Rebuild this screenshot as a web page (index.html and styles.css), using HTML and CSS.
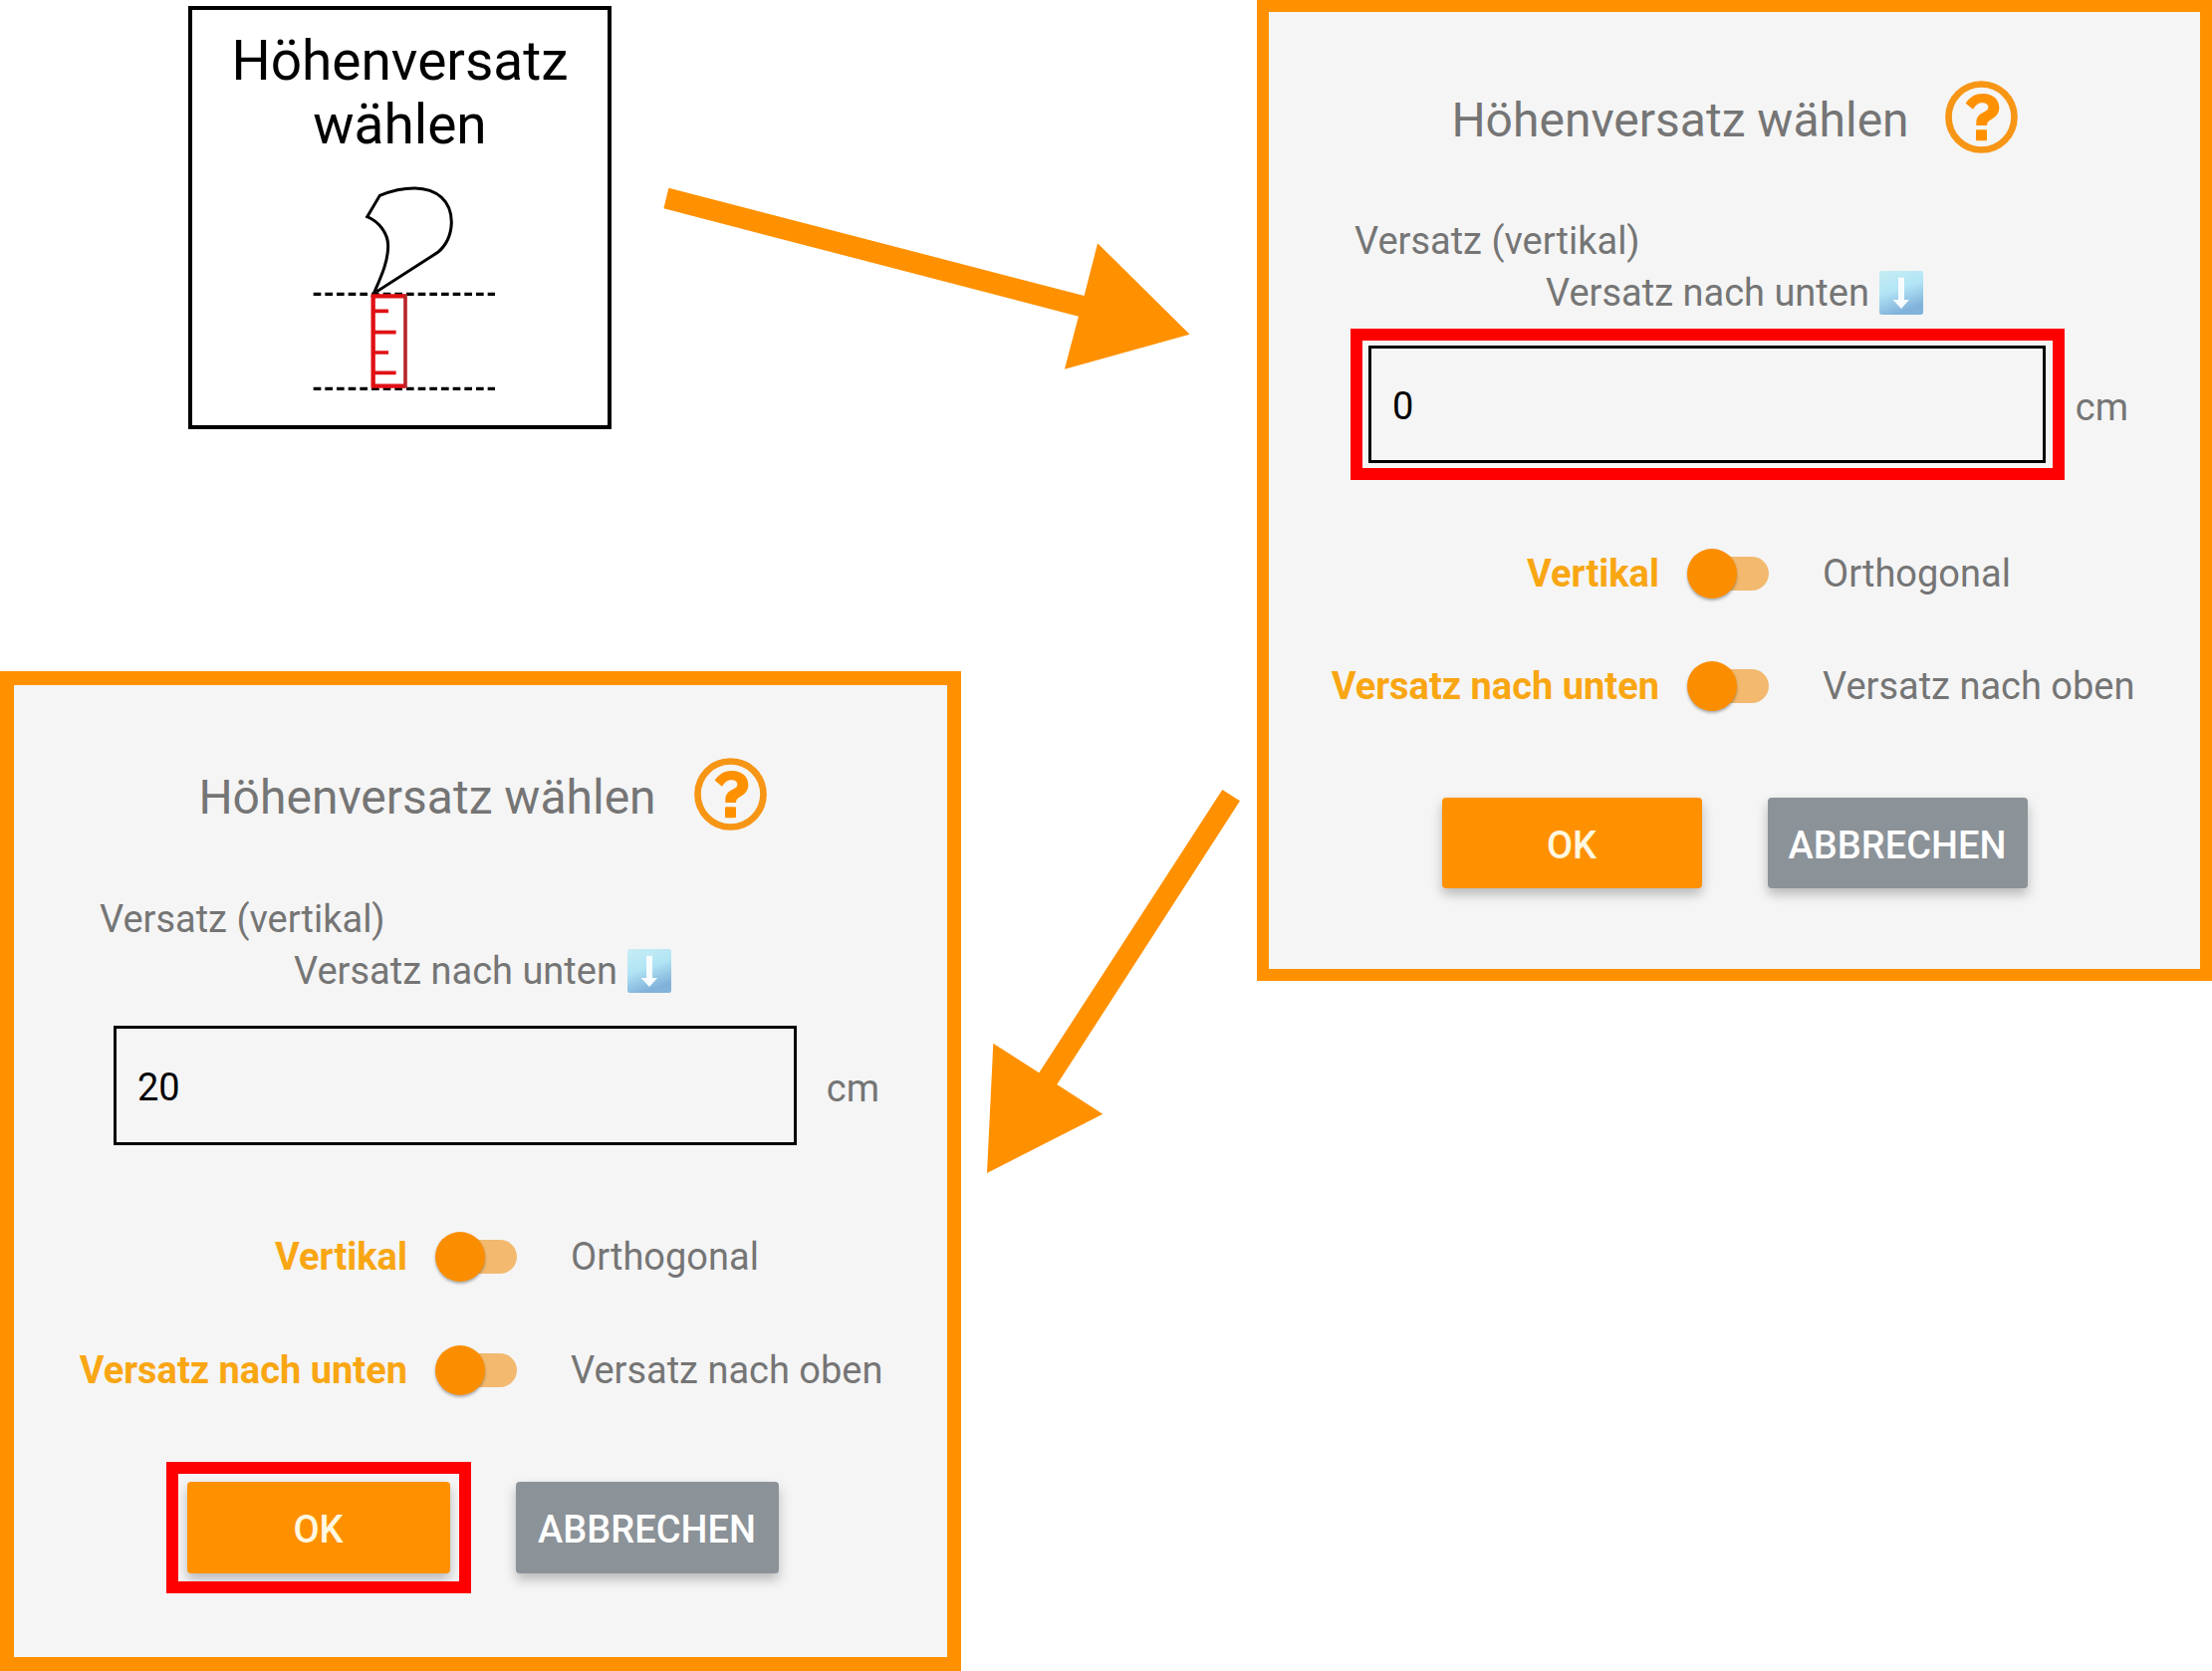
FILE: index.html
```html
<!DOCTYPE html>
<html lang="de">
<head>
<meta charset="utf-8">
<meta name="viewport" content="width=device-width, initial-scale=1">
<title>Höhenversatz wählen</title>
<link rel="stylesheet" href="styles.css">
</head>
<body>
<svg class="symbols" aria-hidden="true">
  <defs>
    <linearGradient id="sky" x1="0" y1="0" x2="0.35" y2="1">
      <stop offset="0" stop-color="#c6edf3"/>
      <stop offset="0.5" stop-color="#b2e5f5"/>
      <stop offset="1" stop-color="#80b2da"/>
    </linearGradient>
    <symbol id="help" viewBox="636 244 219 219">
      <circle cx="745.5" cy="353.5" r="99" fill="none" stroke="#f79515" stroke-width="20"/>
      <path fill="#ff9100" d="M698 312C712 292 728 283 750 283C778 283 799 299 799 325C799 345 787 354 775 361C766 366 762 370 762 379H730V370C730 352 740 345 752 339C762 334 766 331 766 324C766 315 758 311 747 311C735 311 729 318 720 330Z"/>
      <rect x="729" y="392" width="33" height="33" rx="3" fill="#ff9100"/>
    </symbol>
    <symbol id="down" viewBox="0 0 132 132">
      <rect width="132" height="132" rx="7" fill="url(#sky)"/>
      <path fill="#f7fcff" d="M57 20H75V87H90L66 114L41 87H57Z"/>
    </symbol>
  </defs>
</svg>

<main class="guide">
  <div class="column">
    <button class="tile" type="button">
      <span class="tile-title">Höhenversatz wählen</span>
      <svg class="tile-drawing" viewBox="380 555 570 630" aria-hidden="true">
        <g fill="none" stroke="#000" stroke-width="10">
          <path stroke-dasharray="23 12" d="M403 886H950M403 1171H950"/>
          <path stroke-width="9" d="M585 884C606 835 628 790 628 740C628 705 602 668 565 653L603 589C640 574 675 567 708 567C775 568 819 605 819 670C818 705 804 738 778 760Z"/>
        </g>
        <g fill="none" stroke="#e01014">
          <path stroke-width="13" d="M680 892H583V1163H680"/>
          <path stroke="#b8262a" stroke-width="11" d="M680 886V1169"/>
          <path stroke-width="11" d="M583 937H629M583 1001H652M583 1062H629M583 1123H652"/>
        </g>
      </svg>
    </button>

    <form class="dialog dialog-filled">
      <header class="dialog-head">
        <h2 class="dialog-title">Höhenversatz wählen</h2>
        <button class="help" type="button" aria-label="Hilfe"><svg viewBox="0 0 73 73"><use href="#help"/></svg></button>
      </header>
      <label class="caption" for="offset-2">Versatz (vertikal)</label>
      <p class="direction">Versatz nach unten <svg class="emoji" viewBox="0 0 44 44"><use href="#down"/></svg></p>
      <div class="field">
        <span class="field-box"><input class="field-input" id="offset-2" type="text" inputmode="numeric" value="20"></span>
        <span class="unit">cm</span>
      </div>
      <div class="switch-row">
        <label class="active" for="mode-2">Vertikal</label>
        <input class="switch" id="mode-2" type="checkbox" role="switch">
        <label for="mode-2">Orthogonal</label>
      </div>
      <div class="switch-row">
        <label class="active" for="side-2">Versatz nach unten</label>
        <input class="switch" id="side-2" type="checkbox" role="switch">
        <label for="side-2">Versatz nach oben</label>
      </div>
      <div class="actions">
        <span class="action marked"><button class="button ok" type="button">OK</button></span>
        <span class="action"><button class="button cancel" type="button">ABBRECHEN</button></span>
      </div>
    </form>
  </div>

  <div class="column column-right">
    <form class="dialog">
      <header class="dialog-head">
        <h2 class="dialog-title">Höhenversatz wählen</h2>
        <button class="help" type="button" aria-label="Hilfe"><svg viewBox="0 0 73 73"><use href="#help"/></svg></button>
      </header>
      <label class="caption" for="offset-1">Versatz (vertikal)</label>
      <p class="direction">Versatz nach unten <svg class="emoji" viewBox="0 0 44 44"><use href="#down"/></svg></p>
      <div class="field">
        <span class="field-box marked"><input class="field-input" id="offset-1" type="text" inputmode="numeric" value="0"></span>
        <span class="unit">cm</span>
      </div>
      <div class="switch-row">
        <label class="active" for="mode-1">Vertikal</label>
        <input class="switch" id="mode-1" type="checkbox" role="switch">
        <label for="mode-1">Orthogonal</label>
      </div>
      <div class="switch-row">
        <label class="active" for="side-1">Versatz nach unten</label>
        <input class="switch" id="side-1" type="checkbox" role="switch">
        <label for="side-1">Versatz nach oben</label>
      </div>
      <div class="actions">
        <span class="action"><button class="button ok" type="button">OK</button></span>
        <span class="action"><button class="button cancel" type="button">ABBRECHEN</button></span>
      </div>
    </form>
  </div>

  <svg class="arrows" viewBox="0 0 2221 1678" aria-hidden="true">
    <path d="M671.4 188.7L1088.6 297L1102.1 244.3L1194.6 335.7L1068.9 370.7L1082.9 317.7L666.4 209.3Z"/>
    <path d="M1227.3 793L1245 804.3L1061.3 1089L1107.3 1118.7L991 1178L997.3 1047.7L1043.3 1077.3Z"/>
  </svg>
</main>
</body>
</html>
```
FILE: styles.css
```css
*,
*::before,
*::after {
  box-sizing: border-box;
}

body {
  margin: 0;
  background: #fff;
  color: #757575;
  font: 38px/52px Roboto, "Liberation Sans", sans-serif;
}

button,
input {
  margin: 0;
  padding: 0;
  border: 0;
  font: inherit;
}

.symbols {
  position: absolute;
  width: 0;
  height: 0;
}

.guide {
  position: relative;
  display: grid;
  grid-template-columns: 965fr 959fr;
  column-gap: 297px;
  align-items: start;
}

.column {
  display: flex;
  flex-direction: column;
  gap: 243px;
  padding-top: 6px;
}

.column-right {
  padding-top: 0;
}

.arrows {
  position: absolute;
  inset: 0;
  width: 100%;
  fill: #ff9100;
  pointer-events: none;
}

/* Start tile */

.tile {
  display: flex;
  flex-direction: column;
  align-items: center;
  gap: 28px;
  width: 425px;
  margin-left: 189px;
  padding: 19px 32px 32px;
  border: 4px solid #000;
  background: #fff;
  color: #000;
}

.tile-title {
  font-size: 55px;
  line-height: 64px;
}

.tile-drawing {
  width: 190px;
  height: 210px;
}

/* Dialog */

.dialog {
  padding: 69px 0 81px;
  border: 12px solid #ff9100;
  background: #f5f5f5;
}

.dialog-head {
  display: flex;
  justify-content: center;
  align-items: center;
  gap: 36px;
  margin-bottom: 62px;
}

.dialog-title {
  margin: 0;
  padding-top: 6px;
  font-size: 48px;
  font-weight: 400;
  line-height: 64px;
}

.help {
  width: 73px;
  height: 73px;
  background: none;
}

.help svg {
  display: block;
}

.caption {
  display: block;
  padding-left: 86px;
}

.direction {
  display: flex;
  justify-content: center;
  align-items: center;
  gap: 10px;
  margin: 0 0 27px;
}

.emoji {
  width: 44px;
  height: 44px;
}

.field {
  display: flex;
  align-items: center;
  gap: 30px;
  margin-bottom: 85px;
  padding: 0 72px 0 100px;
}

.field-box {
  position: relative;
  flex: 1;
}

.field-input {
  display: block;
  width: 100%;
  height: 118px;
  padding: 3px 21px 0;
  border: 3px solid #000;
  background: none;
  color: #000;
}

.unit {
  padding-top: 5px;
}

.marked::after {
  content: "";
  position: absolute;
  inset: -17px -19px -17px -18px;
  border: 12px solid #f00;
  pointer-events: none;
}

.switch-row {
  display: grid;
  grid-template-columns: 420fr 82px 433fr;
  align-items: center;
  height: 50px;
  margin-bottom: 63px;
}

.switch-row .active {
  padding-right: 28px;
  color: #f9a613;
  font-weight: 700;
  text-align: right;
}

.switch + label {
  padding-left: 54px;
}

.switch {
  appearance: none;
  display: grid;
  align-items: center;
  width: 82px;
  height: 50px;
}

.switch::before,
.switch::after {
  content: "";
  grid-area: 1 / 1;
}

.switch::before {
  height: 34px;
  margin-left: 8px;
  border-radius: 17px;
  background: #f2b96f;
}

.switch::after {
  width: 50px;
  height: 50px;
  border-radius: 50%;
  background: #fb8e00;
  box-shadow: 0 2px 3px rgba(0, 0, 0, 0.3);
}

.actions {
  display: flex;
  justify-content: center;
  gap: 66px;
  margin-top: 88px;
}

.action {
  position: relative;
}

.action.marked::after {
  inset: -20px -21px;
}

.button {
  display: block;
  width: 261px;
  height: 91px;
  padding-top: 4px;
  border-radius: 4px;
  box-shadow: 0 6px 12px rgba(0, 0, 0, 0.25);
  font-weight: 500;
}

.ok {
  background: #ff9100;
  color: #fff8e1;
}

.cancel {
  background: #8b9298;
  color: #fff;
}

/* The second step is drawn slightly larger */

.dialog-filled {
  padding: 73px 0 84px 4px;
  border-width: 14px;
}

.dialog-filled .dialog-head {
  gap: 38px;
  margin-bottom: 63px;
}

.dialog-filled .caption {
  padding-left: 82px;
}

.dialog-filled .direction {
  margin-bottom: 29px;
}

.dialog-filled .field {
  margin-bottom: 86px;
  padding: 0 68px 0 96px;
}

.dialog-filled .field-input {
  height: 120px;
}

.dialog-filled .switch-row {
  margin-bottom: 64px;
}

.dialog-filled .button {
  width: 264px;
  height: 92px;
}
```
